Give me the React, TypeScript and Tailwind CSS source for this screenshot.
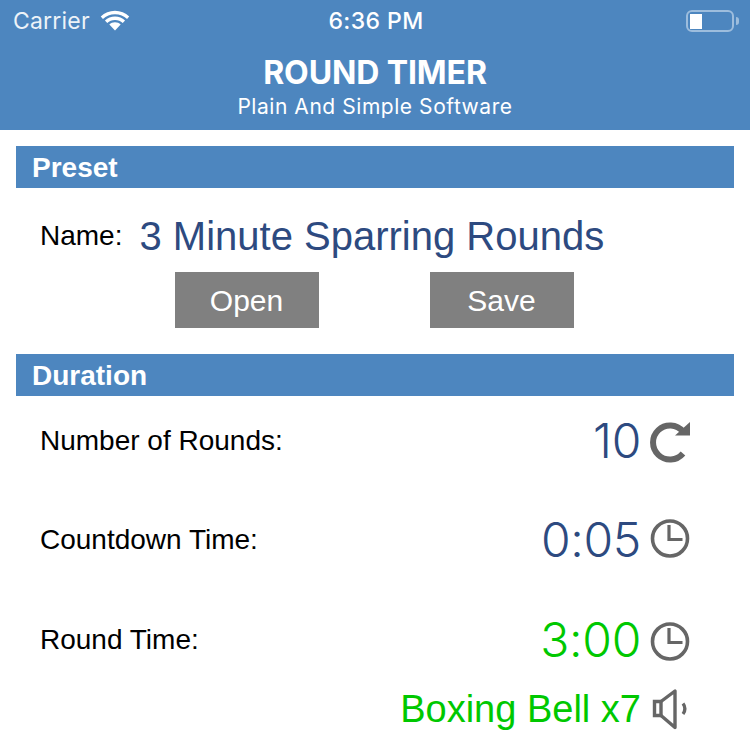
import React from "react";

const sans = "font-['Liberation_Sans',Arial,sans-serif]";

function SectionBar({ title }: { title: string }) {
  return (
    <div className="mx-4 flex h-[42px] items-center bg-[#4d86bf] px-4 pt-[1px] text-[28px] font-bold text-white">
      {title}
    </div>
  );
}

function ClockIcon() {
  return (
    <svg width="42" height="42" viewBox="0 0 42 42" fill="none" stroke="#666666" strokeWidth="3.6">
      <circle cx="20" cy="20.5" r="17.5" />
      <path d="M19 7V21.5H32.5" strokeWidth="3.2" />
    </svg>
  );
}

function RepeatIcon() {
  return (
    <svg className="overflow-visible" width="42" height="42" viewBox="0 0 42 42" fill="none">
      <path d="M33 34.5A17 17 0 1 1 33 12.5" stroke="#666666" strokeWidth="6" />
      <path d="M40 3V16.5H25Z" fill="#666666" />
    </svg>
  );
}

function SpeakerIcon() {
  return (
    <svg width="42" height="42" viewBox="0 0 42 42" fill="none" stroke="#666666">
      <path d="M4.5 12.5H11V26.5H4.5Z" strokeWidth="3.4" />
      <path d="M11 12.5L25 2V38.5L11 26.5" strokeWidth="3.4" strokeLinejoin="round" />
      <path d="M33 14.5C35.5 17.5 35.5 22 33 25" strokeWidth="3.4" />
    </svg>
  );
}

function WifiIcon() {
  return (
    <svg width="30" height="22" viewBox="0 0 28 21" fill="white">
      <path d="M14 4C18.5 4 22.5 5.7 25.5 8.5L27.6 6.2C24 2.8 19.2 .8 14 .8S4 2.8.4 6.2L2.5 8.5C5.5 5.7 9.5 4 14 4Z" />
      <path d="M14 9.5C16.9 9.5 19.4 10.6 21.4 12.4L23.6 10.1C21 7.7 17.7 6.3 14 6.3S7 7.7 4.4 10.1L6.6 12.4C8.6 10.6 11.1 9.5 14 9.5Z" />
      <path d="M14 11.8C11.9 11.8 10 12.6 8.6 13.9L14 19.6L19.4 13.9C18 12.6 16.1 11.8 14 11.8Z" />
    </svg>
  );
}

function Row({
  label,
  value,
  color,
  height,
  icon,
}: {
  label: string;
  value: string;
  color: string;
  height: string;
  icon: React.ReactNode;
}) {
  return (
    <div className={`flex items-center justify-between pl-10 pr-[58px] ${height}`}>
      <span className="text-[28px] text-black">{label}</span>
      <div className="flex items-center gap-[9px]">
        <span className={`font-['Inter',sans-serif] text-[48px] font-[350] tracking-[-0.3px] ${color}`}>{value}</span>
        <div className="-mt-[2px]">{icon}</div>
      </div>
    </div>
  );
}

export default function App() {
  return (
    <div className={`h-[750px] w-[750px] overflow-hidden bg-white ${sans}`}>
      <header className="h-[130px] bg-[#4d86bf] text-white">
        <div className="flex h-[42px] items-center justify-between pl-[13px] pr-[11px] font-['Inter',sans-serif] text-[23px]">
          <div className="flex w-[200px] items-center gap-[10px]">
            <span className="tracking-[0.2px] opacity-90">Carrier</span>
            <WifiIcon />
          </div>
          <span className="font-medium tracking-[0.4px]">6:36 PM</span>
          <div className="flex w-[200px] items-center justify-end">
            <div className="flex h-[22px] w-[48px] items-center rounded-[6px] border-2 border-[#9dbddd] px-[2px]">
              <div className="h-[15px] w-[12px] bg-white" />
            </div>
            <div className="ml-[2px] h-[8px] w-[3px] rounded-r-full bg-[#9dbddd]" />
          </div>
        </div>
        <div className="pt-[11px] text-center font-['Inter',sans-serif] text-[32px] leading-[39px] font-bold tracking-[-0.1px]">ROUND TIMER</div>
        <div className="text-center font-['Inter',sans-serif] text-[21px] leading-[29px] tracking-[0.55px]">Plain And Simple Software</div>
      </header>

      <div className="pt-4">
        <SectionBar title="Preset" />
      </div>

      <div className="flex h-[84px] items-center gap-[18px] pt-[12px] pl-10">
        <span className="text-[28px] text-black">Name:</span>
        <span className="-ml-[1px] text-[40px] text-[#2d4a80]">3 Minute Sparring Rounds</span>
      </div>

      <div className="flex justify-center gap-[111px] pr-[2px]">
        <button className="h-14 w-36 bg-[#808080] text-[30px] text-white">Open</button>
        <button className="h-14 w-36 bg-[#808080] text-[30px] text-white">Save</button>
      </div>

      <div className="pt-[26px]">
        <SectionBar title="Duration" />
      </div>

      <Row label="Number of Rounds:" value="10" color="text-[#2d4a80]" height="h-[90px]" icon={<RepeatIcon />} />
      <Row label="Countdown Time:" value="0:05" color="text-[#2d4a80]" height="h-[108px]" icon={<ClockIcon />} />
      <Row
        label="Round Time:"
        value="3:00"
        color="text-[#00c800]"
        height="h-[92px]"
        icon={
          <div className="mt-[6px]">
            <ClockIcon />
          </div>
        }
      />

      <div className="-mt-[5px] flex items-center justify-end gap-[9px] pr-[58px]">
        <span className="text-[38px] text-[#00c800]">Boxing Bell x7</span>
        <SpeakerIcon />
      </div>
    </div>
  );
}
